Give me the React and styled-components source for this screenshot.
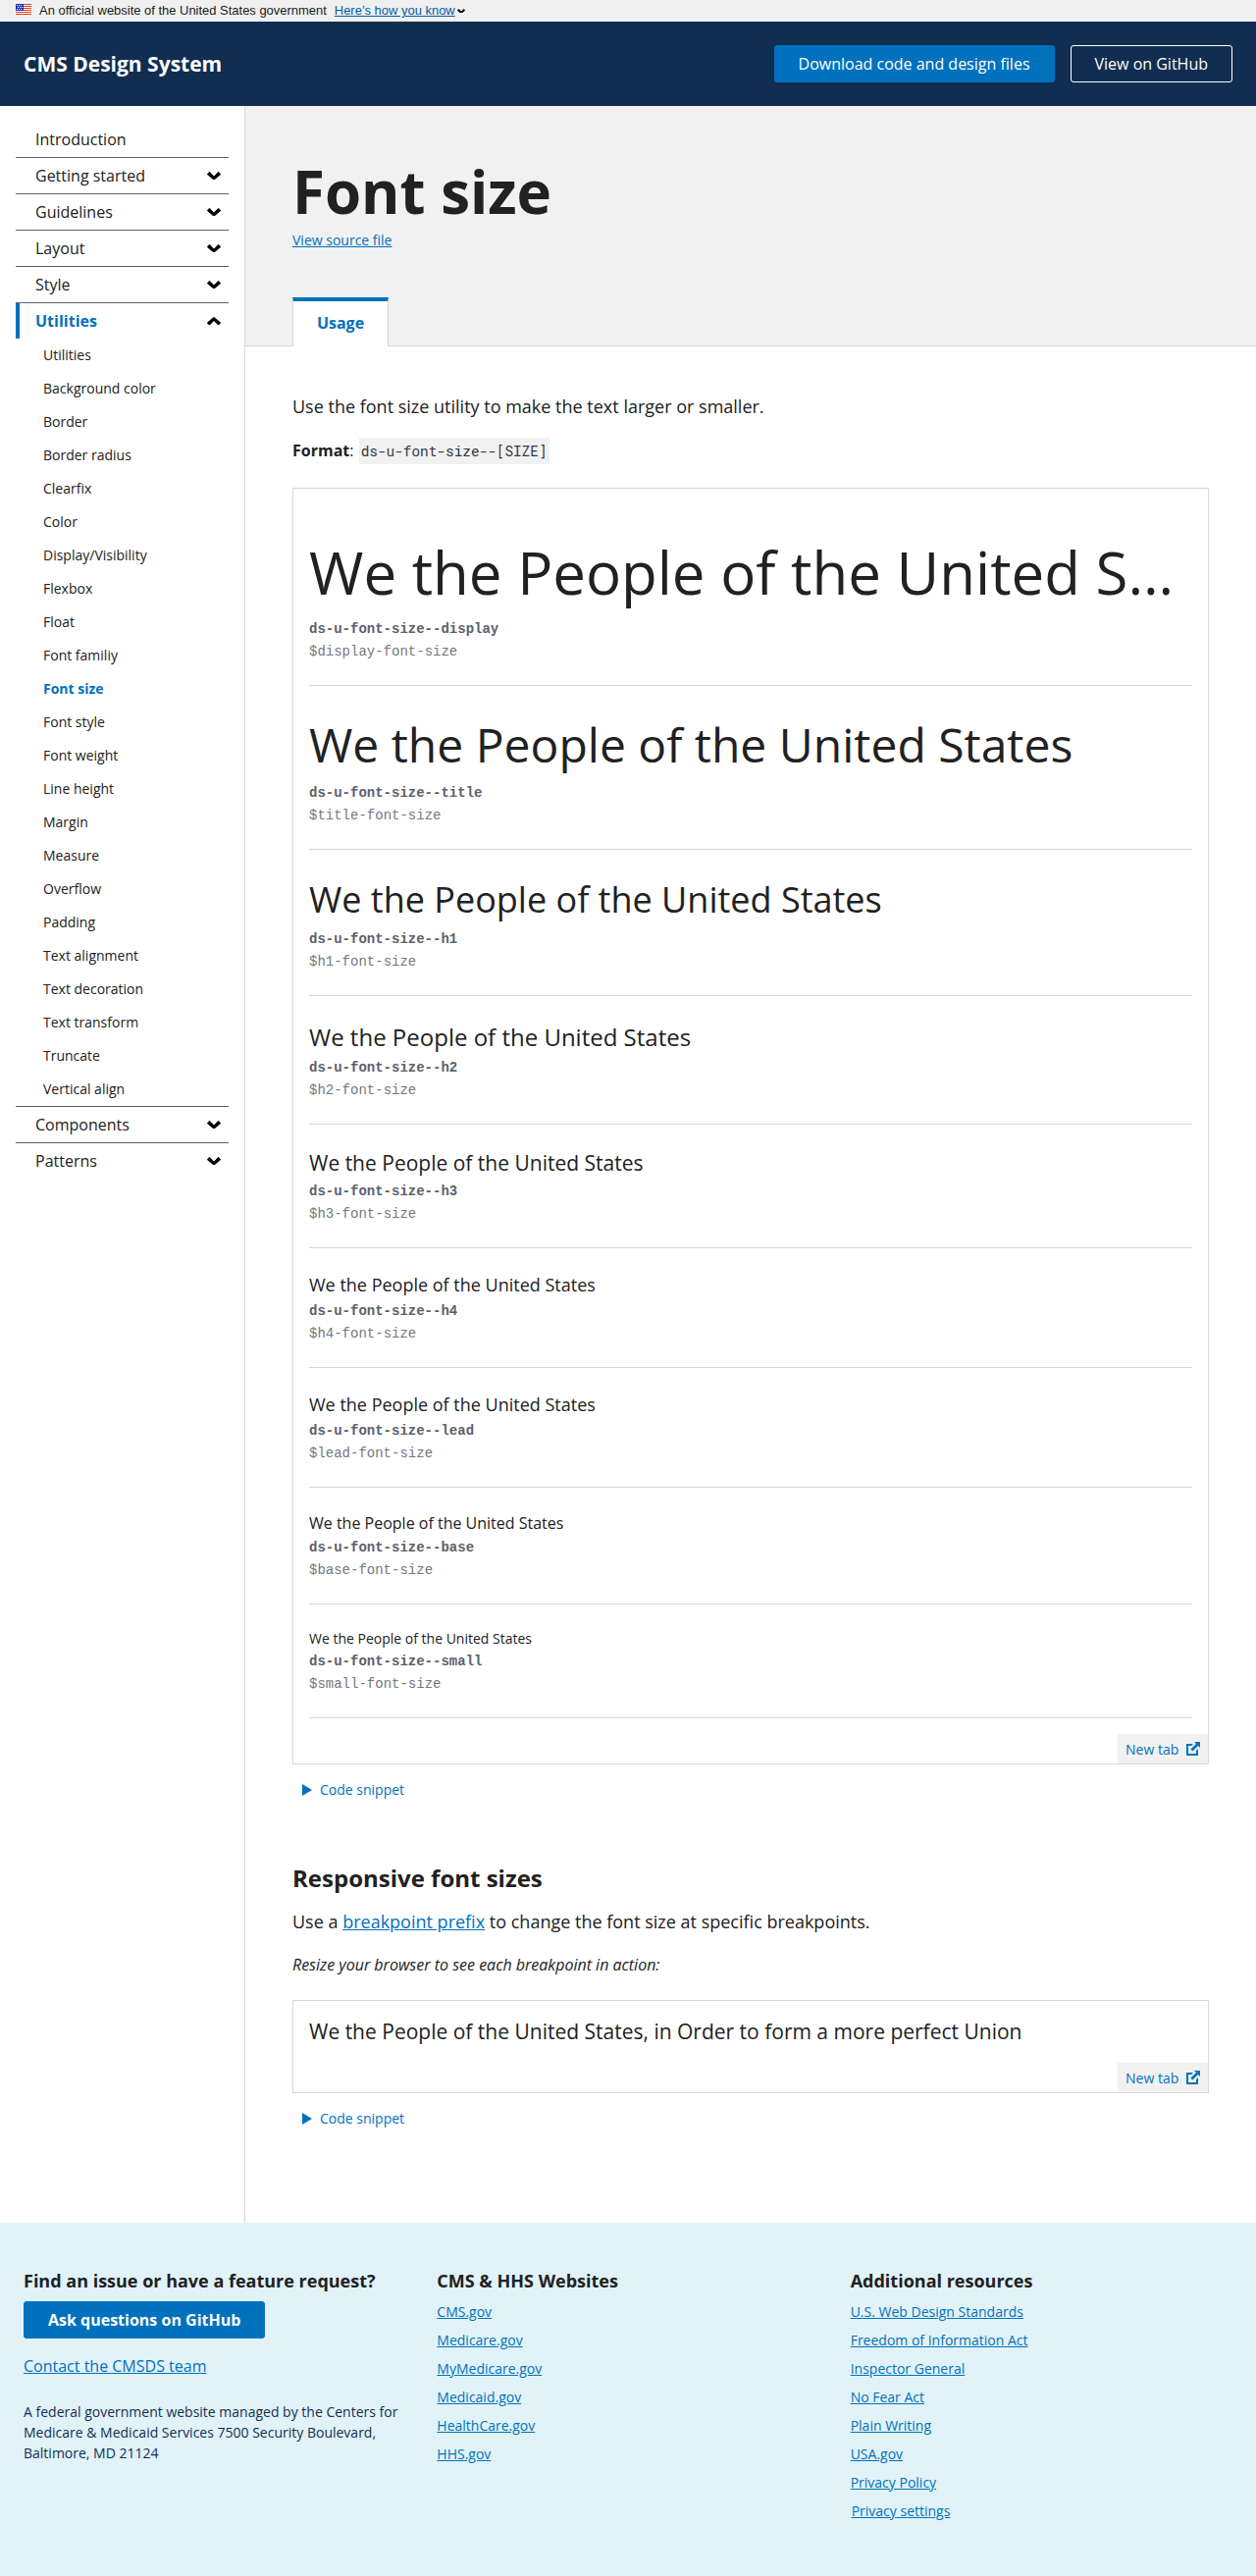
import React from "react";
import styled, { createGlobalStyle } from "styled-components";

const color = {
  ink: "#212121",
  navy: "#112e51",
  primary: "#0071bc",
  line: "#d6d7d9",
  shade: "#f1f1f1",
  gray: "#5b616b",
};

const GlobalStyle = createGlobalStyle`
  *, *::before, *::after { box-sizing: border-box; }
  body {
    margin: 0;
    background: #fff;
    color: ${color.ink};
    font-family: "Open Sans", "Noto Sans", sans-serif;
    font-size: 16px;
    line-height: 1.5;
    -webkit-font-smoothing: antialiased;
  }
  h1, h2, h3, p, ul { margin: 0; padding: 0; }
  ul { list-style: none; }
`;

const Banner = styled.div`
  display: flex;
  align-items: center;
  height: 22px;
  padding: 0 16px;
  background: #f0f0f0;
  color: #1b1b1b;
  font: 12.96px/20px "Liberation Sans", Arial, sans-serif;
  white-space: nowrap;
`;
const FlagSvg = styled.svg`
  display: block;
  width: 16px;
  height: 11px;
  margin: -3px 8px 0 0;
`;
const BannerLink = styled.a`
  display: flex;
  align-items: center;
  gap: 2px;
  margin-left: 8px;
  color: #005ea2;
`;
const Underlined = styled.span`
  text-decoration: underline;
`;

const Header = styled.header`
  display: flex;
  align-items: center;
  justify-content: space-between;
  height: 86px;
  padding: 0 24px;
  background: ${color.navy};
`;
const SiteTitle = styled.span`
  padding-top: 2px;
  color: #fff;
  font-size: 21px;
  font-weight: 700;
  line-height: 1.3;
`;
const ButtonRow = styled.div`
  display: flex;
  gap: 16px;
`;
const Button = styled.a`
  display: inline-flex;
  align-items: center;
  height: 38px;
  padding: 0 24px;
  border: 1px solid ${(p) => (p.$outline ? "#fff" : color.primary)};
  border-radius: 3px;
  background: ${(p) => (p.$outline ? "transparent" : color.primary)};
  color: #fff;
  font-weight: ${(p) => (p.$bold ? 700 : 400)};
  line-height: 1.3;
  white-space: nowrap;
`;

const Page = styled.div`
  display: flex;
  height: 2157px;
`;
const Sidebar = styled.nav`
  flex: none;
  width: 250px;
  padding: 16px;
  border-right: 1px solid ${color.line};
`;
const NavSection = styled.li`
  & + & { border-top: 1px solid ${color.gray}; }
`;
const NavItem = styled.a`
  display: flex;
  align-items: center;
  justify-content: space-between;
  height: 36px;
  padding: 0 8px 0 ${(p) => (p.$open ? 16 : 20)}px;
  border-left: ${(p) => (p.$open ? `4px solid ${color.primary}` : "0")};
  color: ${(p) => (p.$open ? color.primary : color.ink)};
  font-weight: ${(p) => (p.$open ? 700 : 400)};
`;
const SubItem = styled.a`
  display: flex;
  align-items: center;
  height: 34px;
  padding: 0 0 2px 28px;
  color: ${(p) => (p.$current ? color.primary : color.ink)};
  font-size: 14px;
  font-weight: ${(p) => (p.$current ? 700 : 400)};
`;

const ChevronSvg = styled.svg`
  display: block;
  flex: none;
  width: ${(p) => p.$width}px;
  color: #000;
  transform: ${(p) => (p.$up ? "rotate(180deg)" : "none")};
`;

const Main = styled.main`
  flex: 1;
  min-width: 0;
`;
const PageHeader = styled.div`
  height: 245px;
  padding: 48px 48px 0;
  border-bottom: 1px solid ${color.line};
  background: ${color.shade};
`;
const PageTitle = styled.h1`
  font-size: 60px;
  font-weight: 700;
  line-height: 78px;
`;
const Link = styled.a`
  display: ${(p) => (p.$block ? "block" : "inline")};
  width: fit-content;
  color: ${color.primary};
  font-size: ${(p) => (p.$small ? "14px" : "inherit")};
  text-decoration: underline;
`;
const Tab = styled.div`
  display: flex;
  align-items: center;
  justify-content: center;
  width: 98px;
  height: 50px;
  margin-top: 48px;
  padding-bottom: 3px;
  border: 1px solid ${color.line};
  border-top: 4px solid ${color.primary};
  border-bottom: 0;
  background: #fff;
  color: ${color.primary};
  font-weight: 700;
`;
const Content = styled.div`
  padding: 48px 48px 0;
`;
const Lead = styled.p`
  font-size: 18px;
  line-height: 27px;
`;
const Format = styled.p`
  margin-top: 19px;
  line-height: 24px;
`;
const InlineCode = styled.code`
  margin-left: 1px;
  padding: 4px 2px;
  background: ${color.shade};
  color: #323a45;
  font: 14.4px "Roboto Mono", "Liberation Mono", monospace;
`;

const Example = styled.section`
  margin-top: ${(p) => p.$top}px;
  padding: 16px 0 0 16px;
  border: 1px solid ${color.line};
`;
const SizeRow = styled.div`
  margin-right: 16px;
  padding: 24px 0 22.5px;
  border-bottom: 1px solid ${color.line};
`;
const Sample = styled.p`
  overflow: hidden;
  font-size: ${(p) => p.$size}px;
  line-height: ${(p) => Math.floor(p.$size * 1.5)}px;
  text-overflow: ellipsis;
  white-space: nowrap;
`;
const CodeLines = styled.div`
  display: flex;
  flex-direction: column;
  padding-top: 1.5px;
  color: ${color.gray};
  font: 14px/23px "Courier", "Liberation Mono", monospace;
`;
const Variable = styled.span`
  opacity: 0.85;
`;
const NewTab = styled.a`
  display: flex;
  align-items: center;
  justify-content: space-between;
  width: 92px;
  height: 30px;
  margin: 16px 0 0 auto;
  padding: 0 8px;
  background: ${color.shade};
  color: ${color.primary};
  font-size: 14px;
`;
const Snippet = styled.div`
  display: flex;
  align-items: center;
  gap: 8px;
  height: 21px;
  margin: 15px 0 0 10px;
  color: ${color.primary};
  font-size: 14px;
`;
const SectionTitle = styled.h2`
  margin-top: 64px;
  font-size: 24px;
  font-weight: 700;
  line-height: 31px;
`;
const Paragraph = styled.p`
  margin-top: 16px;
  font-size: 18px;
  line-height: 27px;
`;
const Note = styled.p`
  margin-top: 18px;
  font-style: italic;
  line-height: 24px;
`;

const Footer = styled.footer`
  display: grid;
  grid-template-columns: repeat(3, 1fr);
  gap: 32px;
  height: 360px;
  padding: 47px 24px 0;
  background: #e1f3f8;
`;
const FooterTitle = styled.h3`
  height: 33px;
  font-size: 18px;
  font-weight: 700;
  line-height: 24px;
`;
const FooterList = styled.ul`
  display: flex;
  flex-direction: column;
  gap: 8px;
  font-size: 14px;
  line-height: 21px;
`;
const FooterItem = styled.li`
  padding-left: ${(p) => p.$indent || 0}px;
`;
const ContactLine = styled.p`
  margin-top: 16px;
`;
const Address = styled.p`
  margin-top: 24px;
  color: ${color.navy};
  font-size: 14px;
  line-height: 21px;
`;

const Flag = () => (
  <FlagSvg viewBox="0 0 16 11" shapeRendering="crispEdges">
    <rect width="16" height="11" fill="#fff" />
    {[0, 2, 4, 6, 8, 10].map((y) => (
      <rect key={y} y={y} width="16" height="1" fill="#db3e1f" />
    ))}
    <rect width="8" height="7" fill="#1e33b1" />
    {[1, 3, 5].map((y) =>
      [1, 3, 5].map((x) => (
        <rect key={`${x}-${y}`} x={x + (y === 3 ? 1 : 0)} y={y} width="1" height="1" fill="#fff" />
      ))
    )}
  </FlagSvg>
);

const Chevron = ({ width = 14, up }) => (
  <ChevronSvg viewBox="0 0 14 8.6" fill="currentColor" $width={width} $up={up}>
    <path d="M.2 2.2 2 .3q.4-.4.8 0L7 4.6 11.200.3q.4-.4.8 0l1.800 1.900q.3.400 0 .8L7.500 8.300q-.5.500-1 0L.2 3q-.3-.4 0-.8z" />
  </ChevronSvg>
);

const ExternalIcon = () => (
  <svg width="14" height="14" viewBox="0 0 14 14" fill="currentColor">
    <path d="M0 2h7L5.2 4H2v8h8V9l2-2v7H0z" />
    <path d="M8 0h6v6l-2-2-5.6 5.6-2-2L10 2z" />
  </svg>
);

const Triangle = () => (
  <svg width="10" height="12" viewBox="0 0 10 12" fill="currentColor">
    <path d="M0 0l10 6-10 6z" />
  </svg>
);

const utilities = [
  "Utilities", "Background color", "Border", "Border radius", "Clearfix", "Color",
  "Display/Visibility", "Flexbox", "Float", "Font familiy", "Font size", "Font style",
  "Font weight", "Line height", "Margin", "Measure", "Overflow", "Padding",
  "Text alignment", "Text decoration", "Text transform", "Truncate", "Vertical align",
];

const sections = [
  { label: "Introduction", leaf: true },
  { label: "Getting started" },
  { label: "Guidelines" },
  { label: "Layout" },
  { label: "Style" },
  { label: "Utilities", children: utilities },
  { label: "Components" },
  { label: "Patterns" },
];

const sizes = [
  ["display", 60], ["title", 48], ["h1", 36], ["h2", 24], ["h3", 21],
  ["h4", 18], ["lead", 18], ["base", 16], ["small", 14],
];

const websites = ["CMS.gov", "Medicare.gov", "MyMedicare.gov", "Medicaid.gov", "HealthCare.gov", "HHS.gov"];
const resources = [
  "U.S. Web Design Standards", "Freedom of Information Act", "Inspector General", "No Fear Act",
  "Plain Writing", "USA.gov", "Privacy Policy", "Privacy settings",
];

const NewTabLink = () => (
  <NewTab>
    New tab
    <ExternalIcon />
  </NewTab>
);

const CodeSnippet = () => (
  <Snippet>
    <Triangle />
    Code snippet
  </Snippet>
);

export default function App() {
  return (
    <>
      <GlobalStyle />
      <Banner>
        <Flag />
        <span>An official website of the United States government</span>
        <BannerLink>
          <Underlined>Here’s how you know</Underlined>
          <Chevron width={8} />
        </BannerLink>
      </Banner>
      <Header>
        <SiteTitle>CMS Design System</SiteTitle>
        <ButtonRow>
          <Button>Download code and design files</Button>
          <Button $outline>View on GitHub</Button>
        </ButtonRow>
      </Header>
      <Page>
        <Sidebar>
          <ul>
            {sections.map(({ label, leaf, children }) => (
              <NavSection key={label}>
                <NavItem $open={!!children}>
                  {label}
                  {!leaf && <Chevron up={!!children} />}
                </NavItem>
                {children &&
                  children.map((c) => (
                    <SubItem key={c} $current={c === "Font size"}>{c}</SubItem>
                  ))}
              </NavSection>
            ))}
          </ul>
        </Sidebar>
        <Main>
          <PageHeader>
            <PageTitle>Font size</PageTitle>
            <Link $block $small>View source file</Link>
            <Tab>Usage</Tab>
          </PageHeader>
          <Content>
            <Lead>Use the font size utility to make the text larger or smaller.</Lead>
            <Format>
              <strong>Format</strong>: <InlineCode>ds-u-font-size--[SIZE]</InlineCode>
            </Format>
            <Example $top={26}>
              {sizes.map(([name, size]) => (
                <SizeRow key={name}>
                  <Sample $size={size}>We the People of the United States</Sample>
                  <CodeLines>
                    <strong>ds-u-font-size--{name}</strong>
                    <Variable>${name}-font-size</Variable>
                  </CodeLines>
                </SizeRow>
              ))}
              <NewTabLink />
            </Example>
            <CodeSnippet />
            <SectionTitle>Responsive font sizes</SectionTitle>
            <Paragraph>
              Use a <Link>breakpoint prefix</Link> to change the font size at specific breakpoints.
            </Paragraph>
            <Note>Resize your browser to see each breakpoint in action:</Note>
            <Example $top={24}>
              <Sample $size={21}>
                We the People of the United States, in Order to form a more perfect Union
              </Sample>
              <NewTabLink />
            </Example>
            <CodeSnippet />
          </Content>
        </Main>
      </Page>
      <Footer>
        <div>
          <FooterTitle>Find an issue or have a feature request?</FooterTitle>
          <Button $bold>Ask questions on GitHub</Button>
          <ContactLine>
            <Link>Contact the CMSDS team</Link>
          </ContactLine>
          <Address>
            A federal government website managed by the Centers for Medicare &amp; Medicaid Services
            7500 Security Boulevard, Baltimore, MD 21124
          </Address>
        </div>
        <div>
          <FooterTitle>CMS &amp; HHS Websites</FooterTitle>
          <FooterList>
            {websites.map((w) => (
              <FooterItem key={w}><Link>{w}</Link></FooterItem>
            ))}
          </FooterList>
        </div>
        <div>
          <FooterTitle>Additional resources</FooterTitle>
          <FooterList>
            {resources.map((r) => (
              <FooterItem key={r} $indent={r === "Privacy settings" ? 1 : 0}><Link>{r}</Link></FooterItem>
            ))}
          </FooterList>
        </div>
      </Footer>
    </>
  );
}
